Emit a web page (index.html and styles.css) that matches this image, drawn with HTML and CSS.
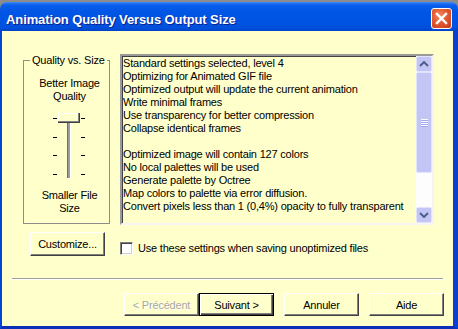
FILE: index.html
```html
<!DOCTYPE html>
<html lang="en">
<head>
  <meta charset="UTF-8">
  <meta name="viewport" content="width=device-width, initial-scale=1.0">
  <title>Animation Quality Versus Output Size</title>
  <link rel="stylesheet" href="styles.css">
</head>
<body>
  <div class="window">
    <div class="titlebar">
      <span class="title">Animation Quality Versus Output Size</span>
      <button class="close" aria-label="Close">
        <svg width="13" height="13" viewBox="0 0 13 13"><path d="M2 2 L11 11 M11 2 L2 11" stroke="#fff" stroke-width="2.4" stroke-linecap="square"/></svg>
      </button>
    </div>

    <div class="client">
      <div class="panel">
        <fieldset class="group">
          <legend>Quality vs. Size</legend>
          <div class="caption">Better Image<br>Quality</div>
          <svg class="slider" width="33" height="66" viewBox="0 0 33 66">
            <!-- ticks -->
            <rect x="0" y="6" width="4" height="1" fill="#000"/>
            <rect x="28" y="6" width="4" height="1" fill="#000"/>
            <rect x="0" y="25" width="4" height="1" fill="#000"/>
            <rect x="28" y="25" width="4" height="1" fill="#000"/>
            <rect x="0" y="43" width="4" height="1" fill="#000"/>
            <rect x="28" y="43" width="4" height="1" fill="#000"/>
            <rect x="0" y="62" width="4" height="1" fill="#000"/>
            <rect x="28" y="62" width="4" height="1" fill="#000"/>
            <!-- track -->
            <rect x="14" y="10" width="3" height="56" fill="#9c9c9c"/>
            <rect x="14" y="10" width="1" height="56" fill="#6f6f6f"/>
            <rect x="17" y="10" width="1" height="56" fill="#ffffff"/>
            <!-- thumb -->
            <rect x="5" y="1" width="22" height="10" fill="#404040"/>
            <rect x="5" y="1" width="21" height="9" fill="#808080"/>
            <rect x="5" y="1" width="20" height="8" fill="#ffffff"/>
            <rect x="6" y="2" width="19" height="7" fill="#ffffcc"/>
          </svg>
          <div class="caption">Smaller File<br>Size</div>
        </fieldset>

        <div class="report">
          <div class="report-text">
            <div>Standard settings selected, level 4</div>
            <div>Optimizing for Animated GIF file</div>
            <div>Optimized output will update the current animation</div>
            <div>Write minimal frames</div>
            <div>Use transparency for better compression</div>
            <div>Collapse identical frames</div>
            <div>&nbsp;</div>
            <div>Optimized image will contain 127 colors</div>
            <div>No local palettes will be used</div>
            <div>Generate palette by Octree</div>
            <div>Map colors to palette via error diffusion.</div>
            <div>Convert pixels less than 1 (0,4%) opacity to fully transparent</div>
          </div>
          <div class="scrollbar">
            <div class="sb-btn">
              <svg width="10" height="6" viewBox="0 0 10 6"><path d="M1 5 L5 1 L9 5" fill="none" stroke="#4d5f8c" stroke-width="2"/></svg>
            </div>
            <div class="sb-thumb">
              <svg width="7" height="8" viewBox="0 0 7 8">
                <rect y="0" width="7" height="1" fill="#fff"/>
                <rect y="1" width="7" height="1" fill="#9fa8ee"/>
                <rect y="2" width="7" height="1" fill="#fff"/>
                <rect y="3" width="7" height="1" fill="#9fa8ee"/>
                <rect y="4" width="7" height="1" fill="#fff"/>
                <rect y="5" width="7" height="1" fill="#9fa8ee"/>
                <rect y="6" width="7" height="1" fill="#fff"/>
                <rect y="7" width="7" height="1" fill="#9fa8ee"/>
              </svg>
            </div>
            <div class="sb-track"></div>
            <div class="sb-btn">
              <svg width="10" height="6" viewBox="0 0 10 6"><path d="M1 1 L5 5 L9 1" fill="none" stroke="#4d5f8c" stroke-width="2"/></svg>
            </div>
          </div>
        </div>

        <div class="custom-cell">
          <button class="btn btn-tall">Customize...</button>
        </div>
        <label class="check">
          <span class="check-box"></span>
          Use these settings when saving unoptimized files
        </label>
      </div>

      <div class="separator"></div>

      <div class="actions">
        <div class="pair">
          <button class="btn" disabled>&lt; Précédent</button>
          <button class="btn btn-default">Suivant &gt;</button>
        </div>
        <button class="btn">Annuler</button>
        <button class="btn">Aide</button>
      </div>
    </div>
  </div>
</body>
</html>
```

FILE: styles.css
```css
* {
  box-sizing: border-box;
}
body {
  margin: 0;
  background-color: #8c8c8c;
  font-family: "Liberation Sans", Arial, sans-serif;
  font-size: 11px;
  letter-spacing: -0.2px;
  color: #000;
}
.window {
  display: flex;
  flex-direction: column;
  width: 458px;
  height: 327px;
  margin-top: 2px;
  border-radius: 7px 7px 0 0;
  overflow: hidden;
}
.titlebar {
  display: flex;
  justify-content: space-between;
  align-items: flex-start;
  height: 29px;
  padding: 0 6px;
  background: linear-gradient(to bottom, #3d8af7 0, #0a5fed 3px, #0055e5 10px, #0054e3 60%, #0050dc 90%, #0043c6 100%);
}
.title {
  margin-top: 11px;
  color: #fff;
  font-size: 13px;
  font-weight: bold;
  line-height: 13px;
  letter-spacing: -0.1px;
  text-shadow: 1px 1px 0 #0a1e8c;
}
.close {
  display: flex;
  align-items: center;
  justify-content: center;
  width: 21px;
  height: 21px;
  margin-top: 6px;
  padding: 0;
  border: 1px solid #fff;
  border-radius: 3px;
  background: radial-gradient(circle at 40% 35%, #f08a68 0, #e2592f 45%, #c63c1c 100%);
}
.client {
  flex: 1;
  display: flex;
  flex-direction: column;
  background-color: #ffffcc;
  border-left: 2px solid #0047d8;
  border-right: 5px solid #0a3fd2;
  border-bottom: 3px solid #0a2fb8;
}
.panel {
  display: grid;
  grid-template-columns: 87px 314px;
  column-gap: 10px;
  row-gap: 7px;
  padding: 23px 0 0 21px;
}
.group {
  display: flex;
  flex-direction: column;
  align-items: center;
  align-self: start;
  min-width: 0;
  margin: 0;
  padding: 10px 0 8px 6px;
  border: 1px solid #8d8d8d;
}
.group legend {
  padding: 0 2px;
  margin-left: 0;
  line-height: 13px;
}
.caption {
  text-align: center;
  line-height: 13px;
}
.slider {
  display: block;
  margin: 9px 0 11px;
}
.report {
  display: flex;
  height: 171px;
  border: 2px solid;
  border-color: #9a9a9a #f4f4f4 #f4f4f4 #9a9a9a;
  box-shadow: inset 1px 1px 0 #404040;
}
.report-text {
  flex: 1;
  padding: 1px 0 0 1px;
  line-height: 13px;
  white-space: nowrap;
  overflow: hidden;
}
.scrollbar {
  display: flex;
  flex-direction: column;
  width: 16px;
  background-color: #fdfdfd;
}
.sb-btn {
  display: flex;
  align-items: center;
  justify-content: center;
  height: 16px;
  background-color: #c3c6f5;
  border: 1px solid #e2e4fc;
  border-radius: 2px;
}
.sb-thumb {
  display: flex;
  align-items: center;
  justify-content: center;
  height: 101px;
  background-color: #c3c6f5;
  border: 1px solid #e2e4fc;
  border-radius: 2px;
}
.sb-track {
  flex: 1;
}
.custom-cell {
  padding-left: 7px;
}
.btn {
  width: 75px;
  height: 23px;
  padding: 0;
  font-family: inherit;
  font-size: 11px;
  letter-spacing: -0.2px;
  color: #000;
  background-color: #ffffcc;
  border: 1px solid;
  border-color: #fff #404040 #404040 #fff;
  box-shadow: inset -1px -1px 0 #808080;
}
.btn-tall {
  height: 24px;
}
.btn-default {
  border: 1px solid #000;
  box-shadow: inset 1px 1px 0 #fff, inset -1px -1px 0 #404040, inset -2px -2px 0 #808080;
}
.btn:disabled {
  color: #a8a8a0;
  text-shadow: 1px 1px 0 #fff;
}
.check {
  display: flex;
  align-items: center;
  gap: 5px;
  height: 13px;
  margin-top: 10px;
  line-height: 13px;
}
.check-box {
  width: 13px;
  height: 13px;
  background-color: #fff;
  border: 1px solid;
  border-color: #808080 #fff #fff #808080;
  box-shadow: inset 1px 1px 0 #404040, inset -1px -1px 0 #d4d0c8;
}
.separator {
  height: 2px;
  margin: 22px 10px 0;
  border-top: 1px solid #a0a0a0;
  border-bottom: 1px solid #fff;
}
.actions {
  display: flex;
  justify-content: flex-end;
  gap: 10px;
  margin-top: 13px;
  padding-right: 9px;
}
.pair {
  display: flex;
}
```
